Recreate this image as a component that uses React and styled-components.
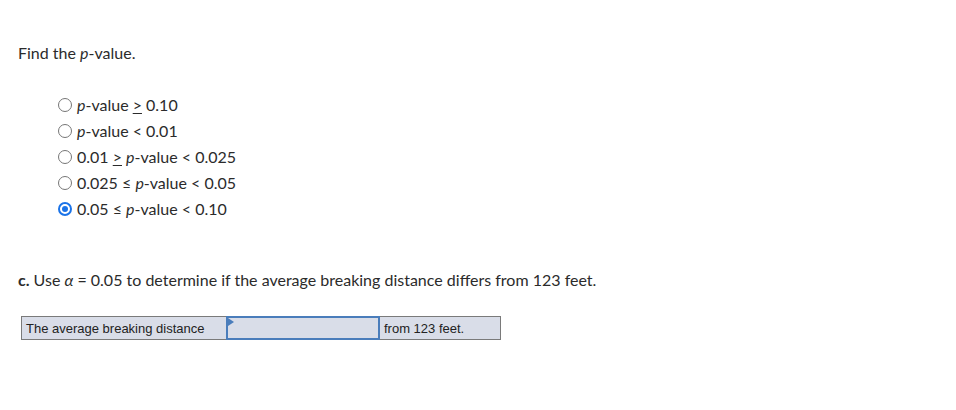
import React from "react";
import styled, { createGlobalStyle } from "styled-components";

const GlobalStyle = createGlobalStyle`
    body {
        margin: 0;
        background: #ffffff;
        font-family: 'Lato', 'Open Sans', sans-serif;
        color: #2b2b2b;
    }
`;

const Page = styled.div`
    width: 956px;
    height: 410px;
    padding: 43px 0 0 18px;
    box-sizing: border-box;
`;

const Prompt = styled.div`
    font-size: 16px;
    line-height: 20px;
`;

const Options = styled.div`
    display: flex;
    flex-direction: column;
    gap: 6px;
    margin-top: 32px;
    margin-left: 40px;
`;

const Option = styled.label`
    display: flex;
    align-items: center;
    gap: 5px;
    font-size: 16px;
    line-height: 20px;
`;

const Radio = styled.span`
    width: 14px;
    height: 14px;
    border-radius: 50%;
    box-sizing: border-box;
    border: ${(p) => (p.checked ? "2px solid #1a73e8" : "1px solid #767676")};
    display: flex;
    align-items: center;
    justify-content: center;
    &::after {
        content: "";
        width: 6px;
        height: 6px;
        border-radius: 50%;
        background: ${(p) => (p.checked ? "#1a73e8" : "transparent")};
    }
`;

const I = styled.i`
    font-style: italic;
`;

const Ge = styled.span`
    text-decoration: underline;
    text-underline-offset: 2px;
`;

const Part = styled.div`
    margin-top: 51px;
    font-size: 16px;
    line-height: 20px;
`;

const Answer = styled.div`
    display: flex;
    align-items: stretch;
    width: 480px;
    height: 24px;
    box-sizing: border-box;
    margin-top: 26px;
    margin-left: 3px;
    border: 1px solid #7a7a7a;
    background: #d9dde8;
    font-family: 'Liberation Sans', Arial, sans-serif;
    font-size: 13px;
    color: #222;
`;

const Cell = styled.div`
    display: flex;
    align-items: center;
    padding-left: 4px;
    width: ${(p) => p.w}px;
    box-sizing: border-box;
`;

const Dropdown = styled.div`
    position: relative;
    width: 154px;
    margin: -1px 0;
    border: 2px solid #4a7dbb;
    box-sizing: border-box;
    background: #d9dde8;
    &::before {
        content: "";
        position: absolute;
        top: 0;
        left: 0;
        border-top: 4px solid transparent;
        border-bottom: 4px solid transparent;
        border-left: 6px solid #4a7dbb;
    }
`;

const options = [
    [<><I>p</I>-value <Ge>&gt;</Ge> 0.10</>, false],
    [<><I>p</I>-value &lt; 0.01</>, false],
    [<>0.01 <Ge>&gt;</Ge> <I>p</I>-value &lt; 0.025</>, false],
    [<>0.025 ≤ <I>p</I>-value &lt; 0.05</>, false],
    [<>0.05 ≤ <I>p</I>-value &lt; 0.10</>, true],
];

export default function App() {
    return (
        <Page>
            <GlobalStyle />
            <Prompt>Find the <I>p</I>-value.</Prompt>
            <Options>
                {options.map(([text, checked], i) => (
                    <Option key={i}>
                        <Radio checked={checked} />
                        <span>{text}</span>
                    </Option>
                ))}
            </Options>
            <Part>
                <b>c.</b> Use <I>α</I> = 0.05 to determine if the average breaking distance differs from 123 feet.
            </Part>
            <Answer>
                <Cell w={204}>The average breaking distance</Cell>
                <Dropdown />
                <Cell w={120}>from 123 feet.</Cell>
            </Answer>
        </Page>
    );
}
